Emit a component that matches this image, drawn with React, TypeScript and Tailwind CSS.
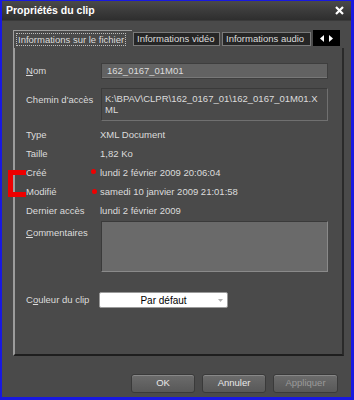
const font = { fontFamily: '"Liberation Sans", Arial, sans-serif' };

function InfoRow({ label, value }: { label: string; value: string }) {
  return (
    <div className="flex h-[19px] items-center">
      <div className="w-[74px] shrink-0">{label}</div>
      <div>{value}</div>
    </div>
  );
}

function DialogButton({ label, disabled }: { label: string; disabled?: boolean }) {
  return (
    <button
      className={
        disabled
          ? "h-[19px] w-[65px] rounded-[3px] border border-[#3a3a3a] bg-gradient-to-b from-[#6c6c6c] to-[#585858] text-[#9a9a9a] shadow-[inset_0_1px_0_#888]"
          : "h-[19px] w-[64px] rounded-[3px] border border-[#3a3a3a] bg-gradient-to-b from-[#6c6c6c] to-[#585858] text-[#e8e8e8] shadow-[inset_0_1px_0_#888]"
      }
    >
      {label}
    </button>
  );
}

export default function App() {
  return (
    <div
      className="relative h-[400px] w-[354px] bg-[#1818e0] pb-[3px] pl-[2px] pr-[3px] pt-[1px] text-[9.5px] text-[#dcdcdc]"
      style={font}
    >
      <div className="flex h-full flex-col bg-[#4a4a4a]">
        {/* title bar */}
        <div className="flex h-[19px] items-center justify-between bg-gradient-to-b from-[#4a4a4a] to-[#2e2e2e] pl-[4px] pr-[7px]">
          <span className="text-[10.5px] font-bold text-white">Propriétés du clip</span>
          <svg width="9" height="9" viewBox="0 0 9 9">
            <path d="M1 1 L8 8 M8 1 L1 8" stroke="white" strokeWidth="2.2" />
          </svg>
        </div>

        <div className="flex flex-1 flex-col border-t border-[#3a3a3a] px-[11px] pt-[9px]">
          {/* tabs */}
          <div className="flex h-[18px] items-end">
            <div className="flex h-[18px] w-[119px] items-center border-l border-t border-[#a0a0a0] bg-[#4a4a4a] pl-[2px]">
              <span className="border border-dotted border-[#bdbdbd] px-[1px] leading-[11px]">Informations sur le fichier</span>
            </div>
            <div className="mb-[2px] ml-px flex h-[14px] w-[87px] items-center border border-[#7a7a7a] bg-[#262626] pl-[3px]">
              Informations vidéo
            </div>
            <div className="mb-[2px] ml-[2px] flex h-[14px] w-[89px] items-center border border-[#7a7a7a] bg-[#262626] pl-[3px]">
              Informations audio
            </div>
            <div className="mb-[2px] ml-[2px] flex h-[16px] w-[27px] items-center justify-center gap-[5px] bg-black">
              <svg width="4" height="7" viewBox="0 0 4 7">
                <path d="M4 0 L0 3.5 L4 7 Z" fill="white" />
              </svg>
              <svg width="4" height="7" viewBox="0 0 4 7">
                <path d="M0 0 L4 3.5 L0 7 Z" fill="white" />
              </svg>
            </div>
          </div>

          {/* panel */}
          <div className="flex h-[308px] w-[331px] flex-col border-b-2 border-l-2 border-r-2 border-b-[#1e1e1e] border-l-[#9c9c9c] border-r-[#2a2a2a] pl-[11px] pr-[14px] pt-[15px]">
            <div className="flex h-[16px] items-center">
              <div className="w-[75px] shrink-0">
                <span className="underline">N</span>om
              </div>
              <div className="flex h-[16px] flex-1 items-center border border-[#3e3e3e] bg-[#626262] pl-[5px] shadow-[inset_0_-1px_0_#777]">
                162_0167_01M01
              </div>
            </div>

            <div className="mt-[9px] flex h-[33px]">
              <div className="w-[75px] shrink-0 pt-[5px]">Chemin d'accès</div>
              <div className="flex-1 border border-[#707070] border-t-[#3a3a3a] border-l-[#3a3a3a] bg-[#4a4a4a] pl-[3px] pt-[4px] leading-[11px]">
                K:\BPAV\CLPR\162_0167_01\162_0167_01M01.X
                <br />
                ML
              </div>
            </div>

            <div className="mt-[5px]">
              <InfoRow label="Type" value="XML Document" />
              <InfoRow label="Taille" value="1,82 Ko" />
              <InfoRow label="Créé" value="lundi 2 février 2009 20:06:04" />
              <InfoRow label="Modifié" value="samedi 10 janvier 2009 21:01:58" />
              <InfoRow label="Dernier accès" value="lundi 2 février 2009" />
            </div>

            <div className="flex h-[51px]">
              <div className="w-[75px] shrink-0 pt-[5px]">
                <span className="underline">C</span>ommentaires
              </div>
              <div className="flex-1 border border-[#3a3a3a] border-b-[#8a8a8a] border-r-[#8a8a8a] bg-[#6a6a6a]" />
            </div>

            <div className="mt-[20px] flex h-[16px] items-center">
              <div className="w-[73px] shrink-0">
                C<span className="underline">o</span>uleur du clip
              </div>
              <div className="relative flex h-[16px] w-[129px] items-center justify-center rounded-[2px] border border-[#9a9a9a] bg-white text-[10px] text-black">
                Par défaut
                <svg className="absolute right-[4px] top-[6px]" width="5" height="3" viewBox="0 0 5 3">
                  <path d="M0 0 L5 0 L2.5 3 Z" fill="#b0b0b0" />
                </svg>
              </div>
            </div>
          </div>

          {/* buttons */}
          <div className="mt-[18px] flex justify-end gap-[7px] pr-[2px]">
            <DialogButton label="OK" />
            <DialogButton label="Annuler" />
            <DialogButton label="Appliquer" disabled />
          </div>
        </div>
      </div>

      {/* red annotations */}
      <div className="absolute left-[8px] top-[170px] h-[27px] w-[18px] border-b-[5px] border-l-[5px] border-t-[5px] border-[#ee0000]" />
      <div className="absolute left-[91px] top-[169px] h-[5px] w-[5px] rounded-full bg-[#ee0000]" />
      <div className="absolute left-[92px] top-[189px] h-[5px] w-[5px] rounded-full bg-[#ee0000]" />
    </div>
  );
}
